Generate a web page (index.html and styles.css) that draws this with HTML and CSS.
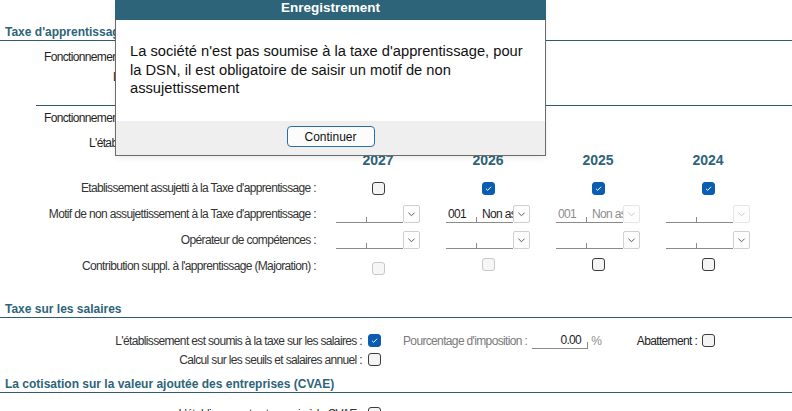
FILE: index.html
```html
<!DOCTYPE html>
<html lang="fr">
<head>
  <meta charset="UTF-8" />
  <title>Etablissement - Taxes</title>
  <link rel="stylesheet" href="styles.css">
</head>
<body>

  <div class="page">

    <!-- TAXE D'APPRENTISSAGE -->
    <h3 class="group-title first">Taxe d'apprentissage</h3>

    <div class="sub">
      <div class="sub-title">Fonctionnement général</div>
      <div class="sub-row">L'établissement relève</div>
    </div>

    <div class="sub sub-sep">
      <div class="sub-title">Fonctionnement CSA</div>
      <div class="sub-row etab">L'établissement</div>
    </div>

    <div class="years">
      <div></div>
      <div class="year">2027</div>
      <div class="year">2026</div>
      <div class="year">2025</div>
      <div class="year">2024</div>

      <div class="lbl">Etablissement assujetti à la Taxe d'apprentissage :</div>
      <div class="cell"><span class="cb"></span></div>
      <div class="cell"><span class="cb checked"><svg viewBox="0 0 13 13"><polyline points="3.5,6.8 5.6,8.7 9.5,4.5"/></svg></span></div>
      <div class="cell"><span class="cb checked"><svg viewBox="0 0 13 13"><polyline points="3.5,6.8 5.6,8.7 9.5,4.5"/></svg></span></div>
      <div class="cell"><span class="cb checked"><svg viewBox="0 0 13 13"><polyline points="3.5,6.8 5.6,8.7 9.5,4.5"/></svg></span></div>

      <div class="lbl">Motif de non assujettissement à la Taxe d'apprentissage :</div>
      <div class="cell">
        <div class="combo">
          <div class="combo-field"><span class="code"></span><span class="lib"></span></div>
          <div class="combo-btn"><svg viewBox="0 0 17 18"><polyline points="5,7.5 8.5,11 12,7.5"/></svg></div>
        </div>
      </div>
      <div class="cell">
        <div class="combo">
          <div class="combo-field"><span class="code">001</span><span class="lib">Non assujetti</span></div>
          <div class="combo-btn"><svg viewBox="0 0 17 18"><polyline points="5,7.5 8.5,11 12,7.5"/></svg></div>
        </div>
      </div>
      <div class="cell">
        <div class="combo disabled">
          <div class="combo-field"><span class="code">001</span><span class="lib">Non assujetti</span></div>
          <div class="combo-btn"><svg viewBox="0 0 17 18"><polyline points="5,7.5 8.5,11 12,7.5"/></svg></div>
        </div>
      </div>
      <div class="cell">
        <div class="combo disabled">
          <div class="combo-field"><span class="code"></span><span class="lib"></span></div>
          <div class="combo-btn"><svg viewBox="0 0 17 18"><polyline points="5,7.5 8.5,11 12,7.5"/></svg></div>
        </div>
      </div>

      <div class="lbl">Opérateur de compétences :</div>
      <div class="cell">
        <div class="combo">
          <div class="combo-field"><span class="code"></span><span class="lib"></span></div>
          <div class="combo-btn"><svg viewBox="0 0 17 18"><polyline points="5,7.5 8.5,11 12,7.5"/></svg></div>
        </div>
      </div>
      <div class="cell">
        <div class="combo">
          <div class="combo-field"><span class="code"></span><span class="lib"></span></div>
          <div class="combo-btn"><svg viewBox="0 0 17 18"><polyline points="5,7.5 8.5,11 12,7.5"/></svg></div>
        </div>
      </div>
      <div class="cell">
        <div class="combo">
          <div class="combo-field"><span class="code"></span><span class="lib"></span></div>
          <div class="combo-btn"><svg viewBox="0 0 17 18"><polyline points="5,7.5 8.5,11 12,7.5"/></svg></div>
        </div>
      </div>
      <div class="cell">
        <div class="combo">
          <div class="combo-field"><span class="code"></span><span class="lib"></span></div>
          <div class="combo-btn"><svg viewBox="0 0 17 18"><polyline points="5,7.5 8.5,11 12,7.5"/></svg></div>
        </div>
      </div>

      <div class="lbl">Contribution suppl. à l'apprentissage (Majoration) :</div>
      <div class="cell low"><span class="cb off"></span></div>
      <div class="cell high"><span class="cb off"></span></div>
      <div class="cell high"><span class="cb"></span></div>
      <div class="cell high"><span class="cb"></span></div>
    </div>

    <!-- TAXE SUR LES SALAIRES -->
    <h3 class="group-title salaires">Taxe sur les salaires</h3>

    <div class="form-row">
      <div class="lbl wide">L'établissement est soumis à la taxe sur les salaires :</div>
      <span class="cb checked"><svg viewBox="0 0 13 13"><polyline points="3.5,6.8 5.6,8.7 9.5,4.5"/></svg></span>
      <div class="lbl muted pct-lbl">Pourcentage d'imposition :</div>
      <div class="num-field">0.00</div>
      <div class="unit">%</div>
      <div class="lbl abat-lbl">Abattement :</div>
      <span class="cb"></span>
    </div>
    <div class="form-row">
      <div class="lbl wide">Calcul sur les seuils et salaires annuel :</div>
      <span class="cb"></span>
    </div>

    <!-- CVAE -->
    <h3 class="group-title cvae">La cotisation sur la valeur ajoutée des entreprises (CVAE)</h3>

    <div class="form-row cvae-row">
      <div class="lbl wide">L'établissement est soumis à la CVAE :</div>
      <span class="cb"></span>
    </div>

  </div>

  <!-- FENETRE D'ENREGISTREMENT -->
  <div class="dialog">
    <div class="dialog-title">Enregistrement</div>
    <div class="dialog-body">
      La société n'est pas soumise à la taxe d'apprentissage, pour la DSN, il est obligatoire de saisir un motif de non assujettissement
    </div>
    <div class="dialog-footer">
      <button class="btn">Continuer</button>
    </div>
  </div>

</body>
</html>
```

FILE: styles.css
```css
* {
  box-sizing: border-box;
  margin: 0;
  padding: 0;
}

body {
  font-family: 'Liberation Sans', Arial, sans-serif;
  font-size: 12px;
  color: #1e1e1e;
  background: #fff;
  overflow: hidden;
  height: 411px;
}

.page {
  width: 792px;
}

/* titres de groupe */

.group-title {
  font-size: 12px;
  line-height: 14px;
  font-weight: bold;
  color: #2e6479;
  padding: 0 5px 1px;
  border-bottom: 1px solid #2e5d71;
}

.group-title.first {
  margin-top: 25px;
}

.group-title.salaires {
  margin-top: 23px;
}

.group-title.cvae {
  margin-top: 8px;
}

/* sous-blocs */

.sub {
  padding-top: 9px;
  white-space: nowrap;
}

.sub-sep {
  margin-left: 36px;
  margin-top: 21px;
  border-top: 1px solid #2e5d71;
  padding-top: 5px;
}

.sub-title,
.sub-row,
.lbl,
.combo-field,
.num-field {
  letter-spacing: -0.65px;
}

.sub-title {
  line-height: 14px;
  padding-left: 44px;
}

.sub-sep .sub-title {
  padding-left: 8px;
}

.sub-row {
  line-height: 14px;
  padding-left: 113px;
  margin-top: 6px;
}

.sub-row.etab {
  padding-left: 53px;
  margin-top: 11px;
}

/* tableau par année */

.years {
  display: grid;
  grid-template-columns: 323px repeat(4, 110px);
  grid-auto-rows: 26px;
  margin-top: -1px;
}

.year {
  font-size: 14px;
  font-weight: bold;
  color: #2e6479;
  text-align: center;
  align-self: center;
  padding-bottom: 4px;
}

.lbl {
  text-align: right;
  align-self: center;
  white-space: nowrap;
  color: #333;
}

.years .lbl {
  padding-right: 7px;
}

.cell {
  display: flex;
  align-items: center;
  justify-content: center;
}

.cell.low {
  padding-top: 4px;
}

.cell.high {
  padding-bottom: 4px;
}

/* cases à cocher */

.cb {
  display: inline-block;
  width: 13px;
  height: 13px;
  border: 1px solid #3b3b3b;
  border-radius: 3px;
  background: #f4f4f4;
  flex-shrink: 0;
}

.cb svg {
  display: block;
  width: 11px;
  height: 11px;
}

.cb.checked {
  background: #0a5db3;
  border-color: #0a5db3;
}

.cb.checked polyline {
  fill: none;
  stroke: #fff;
  stroke-width: 1.1;
}

.cb.off {
  border-color: #c8c8c8;
  background: #f6f6f6;
}

/* listes déroulantes */

.combo {
  display: flex;
  width: 84px;
  height: 18px;
}

.combo-field {
  display: flex;
  width: 67px;
  border-bottom: 1px solid #8a8a8a;
  overflow: hidden;
}

.code {
  position: relative;
  width: 31px;
  padding-left: 2px;
  line-height: 18px;
}

.code::after {
  content: '';
  position: absolute;
  right: 0;
  bottom: 0;
  height: 5px;
  border-right: 1px solid #8a8a8a;
}

.lib {
  flex: 1;
  padding-left: 5px;
  line-height: 18px;
  white-space: nowrap;
  overflow: hidden;
}

.combo-btn {
  width: 17px;
  height: 18px;
  border: 1px solid #cfcfcf;
  border-radius: 2px;
  background: #fdfdfd;
}

.combo-btn svg {
  display: block;
  width: 15px;
  height: 16px;
}

.combo-btn polyline {
  fill: none;
  stroke: #444;
  stroke-width: 1;
}

.combo.disabled .code,
.combo.disabled .lib {
  color: #8d8d8d;
}

.combo.disabled .combo-btn {
  border-color: #e6e6e6;
}

.combo.disabled .combo-btn polyline {
  stroke: #c2c2c2;
}

/* lignes de formulaire */

.form-row {
  display: flex;
  align-items: center;
  height: 19px;
}

.group-title.salaires + .form-row {
  margin-top: 13px;
}

.form-row .lbl.wide {
  width: 362px;
  margin-right: 6px;
}

.cvae-row {
  margin-top: 11px;
}

.muted {
  color: #7a7a7a;
}

.pct-lbl {
  margin-left: 22px;
}

.num-field {
  position: relative;
  width: 56px;
  margin-left: 5px;
  text-align: right;
  padding-right: 7px;
  line-height: 16px;
  border-bottom: 1px solid #8a8a8a;
  color: #222;
}

.num-field::after {
  content: '';
  position: absolute;
  right: 0;
  bottom: 0;
  height: 6px;
  border-right: 1px solid #8a8a8a;
}

.unit {
  margin-left: 3px;
  color: #8d8d8d;
}

.abat-lbl {
  margin-left: 35px;
  margin-right: 5px;
  color: #222;
}

/* fenêtre */

.dialog {
  position: absolute;
  left: 115px;
  top: 0;
  width: 431px;
  height: 156px;
  background: #fff;
  border: 1px solid #6b6b6b;
  border-top: none;
  box-shadow: 0 2px 6px rgba(0, 0, 0, 0.08);
}

.dialog-title {
  height: 20px;
  line-height: 16px;
  background: #2e6479;
  color: #fff;
  font-weight: bold;
  font-size: 13.5px;
  text-align: center;
  margin: 0 -1px;
}

.dialog-body {
  height: 101px;
  padding: 22px 20px 0 14px;
  font-size: 14.7px;
  line-height: 18.5px;
  color: #111;
}

.dialog-footer {
  height: 34px;
  background: #efefef;
  display: flex;
  justify-content: center;
  padding-top: 5px;
}

.btn {
  width: 88px;
  height: 21px;
  border: 1px solid #2a6ea6;
  border-radius: 4px;
  background: #fcfcfc;
  font-family: 'Liberation Sans', Arial, sans-serif;
  font-size: 12px;
  color: #111;
}
```
